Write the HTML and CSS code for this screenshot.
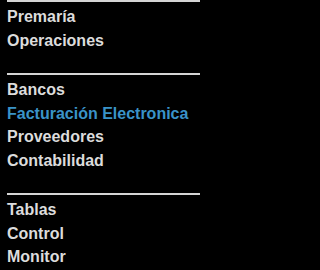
FILE: index.html
```html
<!DOCTYPE html>
<html>
<head>
<meta charset="utf-8">
<link rel="stylesheet" href="styles.css">
</head>
<body>
<nav class="menu">
  <ul class="group">
    <li>Premaría</li>
    <li>Operaciones</li>
  </ul>
  <ul class="group">
    <li>Bancos</li>
    <li class="active">Facturación Electronica</li>
    <li>Proveedores</li>
    <li>Contabilidad</li>
  </ul>
  <ul class="group">
    <li>Tablas</li>
    <li>Control</li>
    <li>Monitor</li>
  </ul>
</nav>
</body>
</html>
```
FILE: styles.css
```css
html, body {
  margin: 0;
  padding: 0;
  background: #000;
}
.menu {
  width: 200px;
  box-sizing: border-box;
  padding-left: 7px;
  font-family: "Liberation Sans", Arial, sans-serif;
  font-weight: bold;
  font-size: 16px;
  color: #dcdcdc;
}
.group {
  list-style: none;
  margin: 0;
  padding: 3px 0 21px 0;
  border-top: 2px solid #d4d4d4;
}
.group:last-child {
  padding-bottom: 0;
}
.group li {
  line-height: 23.5px;
  white-space: nowrap;
}
.group li.active {
  color: #3a93c8;
}
```
